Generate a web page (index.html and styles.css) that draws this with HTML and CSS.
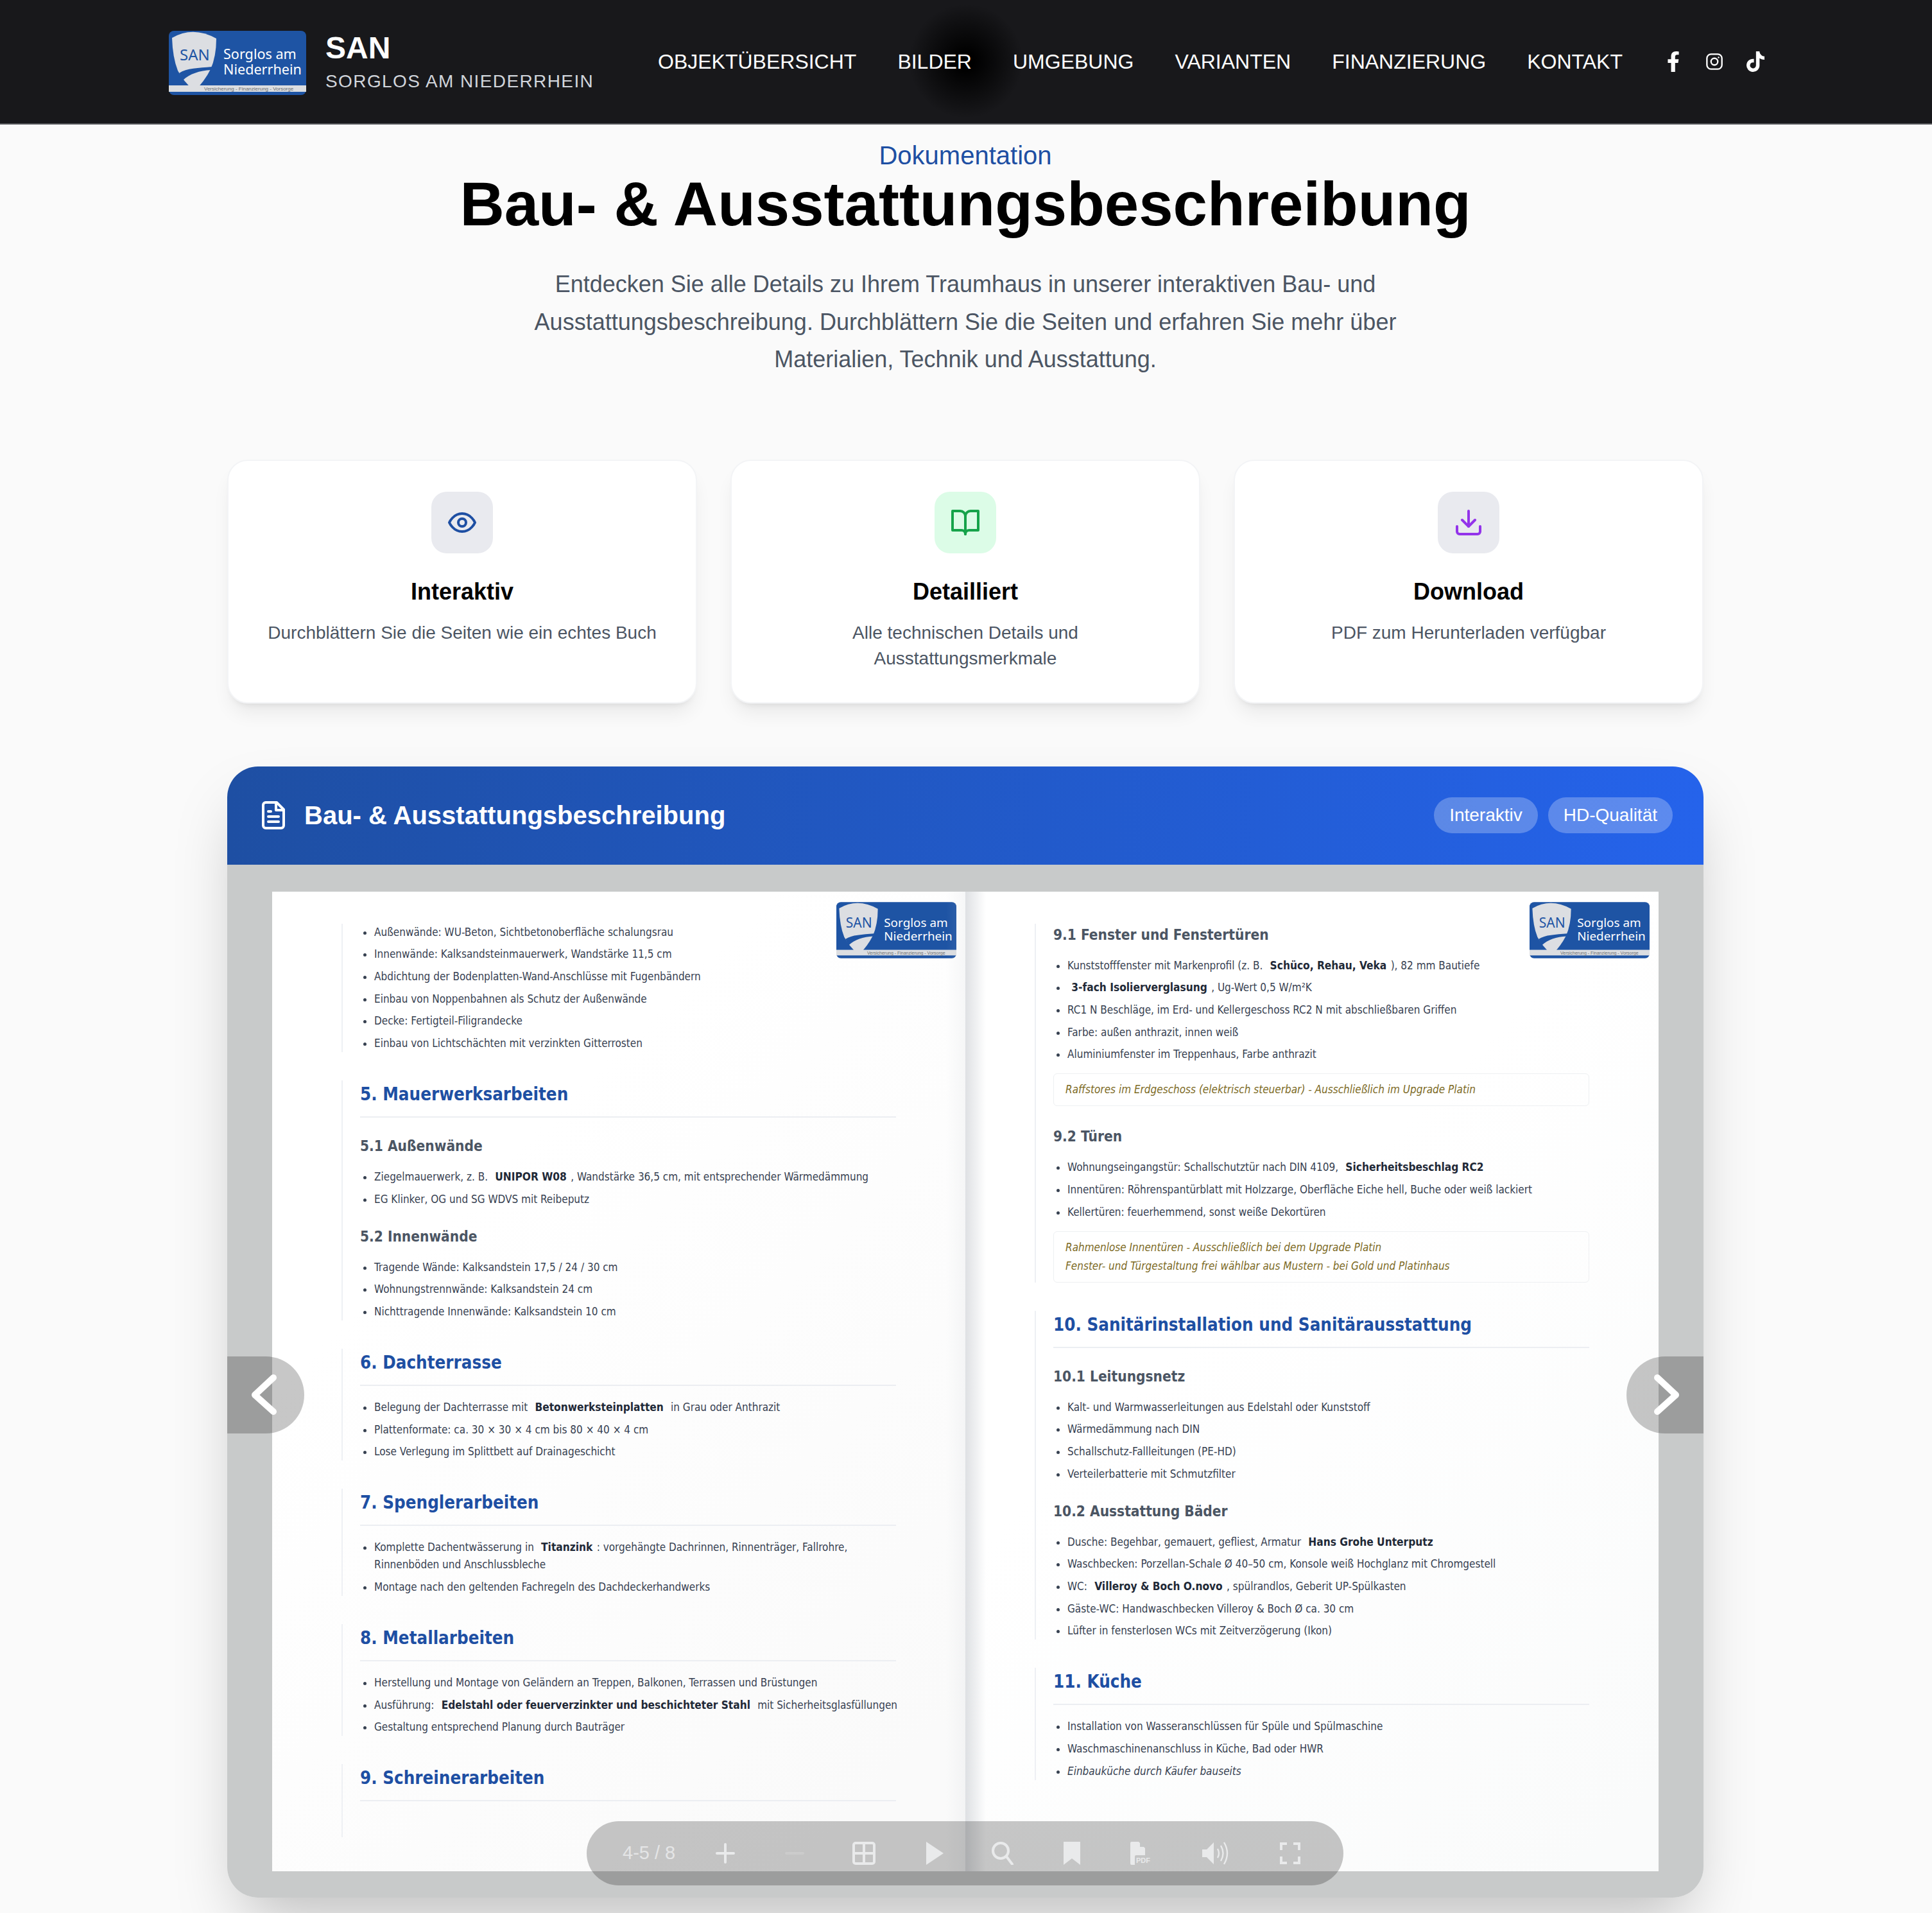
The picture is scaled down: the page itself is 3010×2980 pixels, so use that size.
FILE: index.html
```html
<!DOCTYPE html>
<html lang="de">
	<head>
		<meta http-equiv="Content-Type" content="text/html;charset=utf-8" />
		<title>Bau- &amp; Ausstattungsbeschreibung</title>
		<link rel="stylesheet" href="styles.css">
	</head>
	<body>
		<header class="topbar">
			<div class="brand">
				<svg class="brand-logo" viewBox="0 0 214 100">
					<rect width="214" height="100" rx="8" fill="#1e54a4"/>
					<rect y="85" width="214" height="10" fill="#dcdee1"/>
					<path d="M5 11 Q38 -8 74 12 Q74 40 65 60 Q56 78 40 94 Q22 78 14 62 Q6 42 5 11Z" fill="#dcdee2"/>
					<path d="M16 66 C28 58 46 58 67 56 L66 61 C48 62 32 67 22 77 Z" fill="#1e54a4"/>
					<text x="17" y="46" class="logo-san">SAN</text>
					<text x="85" y="44" class="logo-big">Sorglos am</text>
					<text x="85" y="68" class="logo-big">Niederrhein</text>
					<text x="55" y="93" class="logo-small">Versicherung - Finanzierung - Vorsorge</text>
				</svg>
				<div class="brand-text">
					<div class="brand-name">SAN</div>
					<div class="brand-sub">SORGLOS AM NIEDERRHEIN</div>
				</div>
			</div>
			<nav class="nav">
				<a>OBJEKTÜBERSICHT</a>
				<a>BILDER</a>
				<a>UMGEBUNG</a>
				<a>VARIANTEN</a>
				<a>FINANZIERUNG</a>
				<a>KONTAKT</a>
			</nav>
			<div class="social">
				<svg viewBox="0 0 320 512"><path fill="#fff" d="M279.14 288l14.22-92.66h-88.91v-60.13c0-25.35 12.42-50.06 52.24-50.06h40.42V6.26S260.43 0 225.36 0c-73.22 0-121.08 44.38-121.08 124.72v70.62H22.89V288h81.39v224h100.17V288z"/></svg>
				<svg viewBox="0 0 24 24" fill="none" stroke="#fff" stroke-width="2"><rect x="2" y="2" width="20" height="20" rx="5.5"/><circle cx="12" cy="12" r="4.5"/><circle cx="17.6" cy="6.4" r="1" fill="#fff" stroke="none"/></svg>
				<svg viewBox="0 0 448 512"><path fill="#fff" d="M448,209.91a210.06,210.06,0,0,1-122.77-39.25V349.38A162.55,162.55,0,1,1,185,188.31V278.2a74.62,74.62,0,1,0,52.23,71.18V0l88,0a121.18,121.18,0,0,0,1.86,22.17h0A122.18,122.18,0,0,0,381,102.39a121.43,121.43,0,0,0,67,20.14Z"/></svg>
			</div>
		</header>

		<main class="main">
			<section class="hero">
				<div class="hero-kicker">Dokumentation</div>
				<h1 class="hero-title">Bau- &amp; Ausstattungsbeschreibung</h1>
				<p class="hero-text">Entdecken Sie alle Details zu Ihrem Traumhaus in unserer interaktiven Bau- und Ausstattungsbeschreibung. Durchblättern Sie die Seiten und erfahren Sie mehr über Materialien, Technik und Ausstattung.</p>
			</section>

			<section class="cards">
				<div class="card">
					<div class="card-icon grey">
						<svg viewBox="0 0 24 24" fill="none" stroke="#1e4fa3" stroke-width="2" stroke-linecap="round" stroke-linejoin="round"><path d="M2 12s3-7 10-7 10 7 10 7-3 7-10 7-10-7-10-7Z"/><circle cx="12" cy="12" r="3"/></svg>
					</div>
					<h3 class="card-title">Interaktiv</h3>
					<p class="card-text">Durchblättern Sie die Seiten wie ein echtes Buch</p>
				</div>
				<div class="card">
					<div class="card-icon green">
						<svg viewBox="0 0 24 24" fill="none" stroke="#16a34a" stroke-width="2" stroke-linecap="round" stroke-linejoin="round"><path d="M2 3h6a4 4 0 0 1 4 4v14a3 3 0 0 0-3-3H2z"/><path d="M22 3h-6a4 4 0 0 0-4 4v14a3 3 0 0 1 3-3h7z"/></svg>
					</div>
					<h3 class="card-title">Detailliert</h3>
					<p class="card-text">Alle technischen Details und Ausstattungsmerkmale</p>
				</div>
				<div class="card">
					<div class="card-icon grey">
						<svg viewBox="0 0 24 24" fill="none" stroke="#9333ea" stroke-width="2" stroke-linecap="round" stroke-linejoin="round"><path d="M21 15v4a2 2 0 0 1-2 2H5a2 2 0 0 1-2-2v-4"/><polyline points="7 10 12 15 17 10"/><line x1="12" y1="15" x2="12" y2="3"/></svg>
					</div>
					<h3 class="card-title">Download</h3>
					<p class="card-text">PDF zum Herunterladen verfügbar</p>
				</div>
			</section>

			<section class="viewer">
				<div class="viewer-head">
					<div class="viewer-title">
						<svg viewBox="0 0 24 24" fill="none" stroke="#fff" stroke-width="2" stroke-linecap="round" stroke-linejoin="round"><path d="M14.5 2H6a2 2 0 0 0-2 2v16a2 2 0 0 0 2 2h12a2 2 0 0 0 2-2V7.5L14.5 2z"/><polyline points="14 2 14 8 20 8"/><line x1="16" y1="13" x2="8" y2="13"/><line x1="16" y1="17" x2="8" y2="17"/><line x1="10" y1="9" x2="8" y2="9"/></svg>
						<span>Bau- &amp; Ausstattungsbeschreibung</span>
					</div>
					<div class="badges">
						<span class="badge">Interaktiv</span>
						<span class="badge">HD-Qualität</span>
					</div>
				</div>

				<div class="viewer-body">
					<div class="book">
						<div class="page page-left">
							<svg class="page-logo" viewBox="0 0 214 100">
								<rect width="214" height="100" rx="8" fill="#1e54a4"/>
								<rect y="85" width="214" height="10" fill="#dcdee1"/>
								<path d="M5 11 Q38 -8 74 12 Q74 40 65 60 Q56 78 40 94 Q22 78 14 62 Q6 42 5 11Z" fill="#dcdee2"/>
								<path d="M16 66 C28 58 46 58 67 56 L66 61 C48 62 32 67 22 77 Z" fill="#1e54a4"/>
								<text x="17" y="46" class="logo-san">SAN</text>
								<text x="85" y="44" class="logo-big">Sorglos am</text>
								<text x="85" y="68" class="logo-big">Niederrhein</text>
								<text x="55" y="93" class="logo-small">Versicherung - Finanzierung - Vorsorge</text>
							</svg>
							<div class="block">
								<ul>
									<li>Außenwände: WU-Beton, Sichtbetonoberfläche schalungsrau</li>
									<li>Innenwände: Kalksandsteinmauerwerk, Wandstärke 11,5 cm</li>
									<li>Abdichtung der Bodenplatten-Wand-Anschlüsse mit Fugenbändern</li>
									<li>Einbau von Noppenbahnen als Schutz der Außenwände</li>
									<li>Decke: Fertigteil-Filigrandecke</li>
									<li>Einbau von Lichtschächten mit verzinkten Gitterrosten</li>
								</ul>
							</div>
							<div class="block">
								<h2>5. Mauerwerksarbeiten</h2>
								<h3>5.1 Außenwände</h3>
								<ul>
									<li>Ziegelmauerwerk, z. B. &nbsp;<strong>UNIPOR W08</strong> , Wandstärke 36,5 cm, mit entsprechender Wärmedämmung</li>
									<li>EG Klinker, OG und SG WDVS mit Reibeputz</li>
								</ul>
								<h3>5.2 Innenwände</h3>
								<ul>
									<li>Tragende Wände: Kalksandstein 17,5 / 24 / 30 cm</li>
									<li>Wohnungstrennwände: Kalksandstein 24 cm</li>
									<li>Nichttragende Innenwände: Kalksandstein 10 cm</li>
								</ul>
							</div>
							<div class="block">
								<h2>6. Dachterrasse</h2>
								<ul>
									<li>Belegung der Dachterrasse mit &nbsp;<strong>Betonwerksteinplatten</strong>&nbsp; in Grau oder Anthrazit</li>
									<li>Plattenformate: ca. 30 × 30 × 4 cm bis 80 × 40 × 4 cm</li>
									<li>Lose Verlegung im Splittbett auf Drainageschicht</li>
								</ul>
							</div>
							<div class="block">
								<h2>7. Spenglerarbeiten</h2>
								<ul>
									<li>Komplette Dachentwässerung in &nbsp;<strong>Titanzink</strong> : vorgehängte Dachrinnen, Rinnenträger, Fallrohre,<br>Rinnenböden und Anschlussbleche</li>
									<li>Montage nach den geltenden Fachregeln des Dachdeckerhandwerks</li>
								</ul>
							</div>
							<div class="block">
								<h2>8. Metallarbeiten</h2>
								<ul>
									<li>Herstellung und Montage von Geländern an Treppen, Balkonen, Terrassen und Brüstungen</li>
									<li class="one-line">Ausführung: &nbsp;<strong>Edelstahl oder feuerverzinkter und beschichteter Stahl</strong>&nbsp; mit Sicherheitsglasfüllungen</li>
									<li>Gestaltung entsprechend Planung durch Bauträger</li>
								</ul>
							</div>
							<div class="block block-open">
								<h2>9. Schreinerarbeiten</h2>
							</div>
						</div>

						<div class="page page-right">
							<svg class="page-logo" viewBox="0 0 214 100">
								<rect width="214" height="100" rx="8" fill="#1e54a4"/>
								<rect y="85" width="214" height="10" fill="#dcdee1"/>
								<path d="M5 11 Q38 -8 74 12 Q74 40 65 60 Q56 78 40 94 Q22 78 14 62 Q6 42 5 11Z" fill="#dcdee2"/>
								<path d="M16 66 C28 58 46 58 67 56 L66 61 C48 62 32 67 22 77 Z" fill="#1e54a4"/>
								<text x="17" y="46" class="logo-san">SAN</text>
								<text x="85" y="44" class="logo-big">Sorglos am</text>
								<text x="85" y="68" class="logo-big">Niederrhein</text>
								<text x="55" y="93" class="logo-small">Versicherung - Finanzierung - Vorsorge</text>
							</svg>
							<div class="block">
								<h3>9.1 Fenster und Fenstertüren</h3>
								<ul>
									<li>Kunststofffenster mit Markenprofil (z. B. &nbsp;<strong>Schüco, Rehau, Veka</strong> ), 82 mm Bautiefe</li>
									<li>&nbsp;<strong>3-fach Isolierverglasung</strong> , Ug-Wert 0,5 W/m²K</li>
									<li>RC1 N Beschläge, im Erd- und Kellergeschoss RC2 N mit abschließbaren Griffen</li>
									<li>Farbe: außen anthrazit, innen weiß</li>
									<li>Aluminiumfenster im Treppenhaus, Farbe anthrazit</li>
								</ul>
								<div class="note">Raffstores im Erdgeschoss (elektrisch steuerbar) - Ausschließlich im Upgrade Platin</div>
								<h3>9.2 Türen</h3>
								<ul>
									<li>Wohnungseingangstür: Schallschutztür nach DIN 4109, &nbsp;<strong>Sicherheitsbeschlag RC2</strong></li>
									<li>Innentüren: Röhrenspantürblatt mit Holzzarge, Oberfläche Eiche hell, Buche oder weiß lackiert</li>
									<li>Kellertüren: feuerhemmend, sonst weiße Dekortüren</li>
								</ul>
								<div class="note">Rahmenlose Innentüren - Ausschließlich bei dem Upgrade Platin<br>Fenster- und Türgestaltung frei wählbar aus Mustern - bei Gold und Platinhaus</div>
							</div>
							<div class="block">
								<h2>10. Sanitärinstallation und Sanitärausstattung</h2>
								<h3>10.1 Leitungsnetz</h3>
								<ul>
									<li>Kalt- und Warmwasserleitungen aus Edelstahl oder Kunststoff</li>
									<li>Wärmedämmung nach DIN</li>
									<li>Schallschutz-Fallleitungen (PE-HD)</li>
									<li>Verteilerbatterie mit Schmutzfilter</li>
								</ul>
								<h3>10.2 Ausstattung Bäder</h3>
								<ul>
									<li>Dusche: Begehbar, gemauert, gefliest, Armatur &nbsp;<strong>Hans Grohe Unterputz</strong></li>
									<li>Waschbecken: Porzellan-Schale Ø 40–50 cm, Konsole weiß Hochglanz mit Chromgestell</li>
									<li>WC: &nbsp;<strong>Villeroy &amp; Boch O.novo</strong> , spülrandlos, Geberit UP-Spülkasten</li>
									<li>Gäste-WC: Handwaschbecken Villeroy &amp; Boch Ø ca. 30 cm</li>
									<li>Lüfter in fensterlosen WCs mit Zeitverzögerung (Ikon)</li>
								</ul>
							</div>
							<div class="block">
								<h2>11. Küche</h2>
								<ul>
									<li>Installation von Wasseranschlüssen für Spüle und Spülmaschine</li>
									<li>Waschmaschinenanschluss in Küche, Bad oder HWR</li>
									<li><em>Einbauküche durch Käufer bauseits</em></li>
								</ul>
							</div>
						</div>
					</div>

					<div class="arrow arrow-left">
						<svg viewBox="0 0 120 120" fill="none" stroke="#fff" stroke-width="10" stroke-linecap="round" stroke-linejoin="round"><polyline points="72 33 43 60 72 86"/></svg>
					</div>
					<div class="arrow arrow-right">
						<svg viewBox="0 0 120 120" fill="none" stroke="#fff" stroke-width="10" stroke-linecap="round" stroke-linejoin="round"><polyline points="48 33 77 60 48 86"/></svg>
					</div>

					<div class="controls">
						<span class="count">4-5 / 8</span>
						<span class="ctl"><svg viewBox="0 0 36 36" fill="none" stroke="currentColor" stroke-width="4" stroke-linecap="round"><path d="M18 4v28M5 18h26"/></svg></span>
						<span class="ctl faded"><svg viewBox="0 0 36 36" fill="none" stroke="currentColor" stroke-width="4" stroke-linecap="round"><path d="M5 18h26"/></svg></span>
						<span class="ctl"><svg viewBox="0 0 36 36" fill="none" stroke="currentColor" stroke-width="4"><rect x="2" y="2" width="32" height="32" rx="3"/><path d="M18 2v32M2 18h32"/></svg></span>
						<span class="ctl"><svg viewBox="0 0 36 36" fill="currentColor"><path d="M7 0 L34 18 L7 36 Z"/></svg></span>
						<span class="ctl"><svg viewBox="0 0 36 36" fill="none" stroke="currentColor" stroke-width="4" stroke-linecap="round"><circle cx="15" cy="14" r="12"/><path d="M24 23l9 12"/></svg></span>
						<span class="ctl"><svg viewBox="0 0 36 36" fill="currentColor"><path d="M5 0h26v36L18 26 5 36Z"/></svg></span>
						<span class="ctl"><svg viewBox="0 0 36 36" fill="currentColor"><path d="M1 2q0-2 2-2h11l10 10v11H10q-2 0-2 2v13H3q-2 0-2-2Z"/><path d="M16 0l8 8h-8Z" fill="#c4c6c6"/><text x="10" y="33" class="pdf-text">PDF</text></svg></span>
						<span class="ctl wide"><svg viewBox="0 0 44 36" fill="currentColor"><path d="M1 12h7L19 1v34L8 24H1Z"/><path d="M25 11q4 7 0 14M30 6q7 12 0 24M35 1q10 17 0 34" fill="none" stroke="currentColor" stroke-width="2.4"/></svg></span>
						<span class="ctl"><svg viewBox="0 0 36 36" fill="none" stroke="currentColor" stroke-width="4"><path d="M13 3H4v10M23 3h9v10M13 33H4V23M23 33h9V23"/></svg></span>
					</div>
				</div>
			</section>
		</main>
	</body>
</html>
```

FILE: styles.css
```css
html, body {
	margin: 0;
	padding: 0;
	height: 2980px;
	overflow: hidden;
}
body {
	background-color: #fafafa;
	font-family: "Liberation Sans", Arial, sans-serif;
	color: #000;
}

/* logo */
.logo-san {
	font-family: "Noto Sans", sans-serif;
	font-size: 24px;
	fill: #1e54a4;
}
.logo-big {
	font-family: "Noto Sans", sans-serif;
	font-size: 21.6px;
	fill: #fff;
}
.logo-small {
	font-family: "Liberation Sans", sans-serif;
	font-size: 8px;
	fill: #6b6e73;
}

/* top bar */
.topbar {
	position: relative;
	display: flex;
	align-items: center;
	height: 192px;
	padding-left: 263px;
	background-color: #18181b;
	border-bottom: 2px solid #55565a;
}
.topbar::after {
	content: "";
	position: absolute;
	left: 1415px;
	top: 5px;
	width: 180px;
	height: 180px;
	background: radial-gradient(circle, #000 10%, rgba(0,0,0,0) 70%);
}
.brand {
	display: flex;
	align-items: center;
	width: 762px;
	flex: none;
}
.brand-logo {
	width: 214px;
	height: 100px;
	margin-right: 30px;
	margin-top: 4px;
}
.brand-text {
	padding-top: 2px;
}
.brand-name {
	font-size: 48px;
	font-weight: bold;
	line-height: 56px;
	color: #fff;
}
.brand-sub {
	margin-top: 4px;
	font-size: 28px;
	line-height: 40px;
	letter-spacing: 1.4px;
	color: #d1d5db;
}
.nav {
	position: relative;
	z-index: 1;
	display: flex;
	gap: 64px;
	font-size: 32px;
	color: #fff;
}
.social {
	position: relative;
	z-index: 1;
	display: flex;
	align-items: center;
	gap: 36px;
	margin-left: 65px;
}
.social svg {
	display: block;
	width: 28px;
	height: 32px;
}

/* hero */
.main {
	width: 2300px;
	margin-left: 354px;
}
.hero {
	padding-top: 18px;
	text-align: center;
}
.hero-kicker {
	font-size: 40px;
	line-height: 60px;
	color: #1e4fa3;
}
.hero-title {
	margin: -1px 0 0;
	font-size: 96px;
	line-height: 94px;
	font-weight: bold;
}
.hero-text {
	width: 1400px;
	margin: 49px auto 0;
	font-size: 36px;
	line-height: 58.5px;
	color: #4b5563;
}

/* feature cards */
.cards {
	display: grid;
	grid-template-columns: repeat(3, 1fr);
	gap: 52px;
	margin-top: 126px;
}
.card {
	padding: 48px;
	background-color: #fff;
	border: 2px solid #f3f4f6;
	border-radius: 32px;
	text-align: center;
	box-shadow: 0 20px 30px -6px rgba(0,0,0,0.07), 0 8px 12px -8px rgba(0,0,0,0.1);
}
.card-icon {
	display: flex;
	align-items: center;
	justify-content: center;
	width: 96px;
	height: 96px;
	margin: 0 auto 32px;
	border-radius: 24px;
}
.card-icon svg {
	width: 48px;
	height: 48px;
}
.card-icon.grey {
	background-color: #e9eaef;
}
.card-icon.green {
	background-color: #dcfce7;
}
.card-title {
	margin: 0 0 16px;
	font-size: 36px;
	line-height: 56px;
	font-weight: bold;
}
.card-text {
	margin: 0;
	font-size: 28px;
	line-height: 40px;
	color: #4b5563;
}

/* book viewer */
.viewer {
	margin-top: 98px;
	border-radius: 48px;
	overflow: hidden;
	box-shadow: 0 50px 100px -24px rgba(0,0,0,0.25);
}
.viewer-head {
	display: flex;
	align-items: center;
	justify-content: space-between;
	height: 153px;
	padding: 0 48px;
	background: linear-gradient(90deg, #1e4fa3, #2563eb);
	color: #fff;
}
.viewer-title {
	display: flex;
	align-items: center;
	gap: 24px;
	font-size: 40px;
	font-weight: bold;
}
.viewer-title svg {
	width: 48px;
	height: 48px;
}
.badges {
	display: flex;
	gap: 16px;
}
.badge {
	padding: 0 24px;
	font-size: 28px;
	line-height: 56px;
	border-radius: 28px;
	background-color: rgba(255,255,255,0.26);
}
.viewer-body {
	position: relative;
	height: 1526px;
	padding: 42px 70px 41px;
	background-color: #c8caca;
}
.book {
	display: grid;
	grid-template-columns: 1fr 1fr;
	height: 100%;
}
.page {
	position: relative;
	padding: 50px 108px 0;
	font-family: "DejaVu Sans", sans-serif;
	font-stretch: condensed;
	color: #374151;
	overflow: hidden;
}
.page-left {
	background: linear-gradient(135deg, #fff 30%, #fafafa 90%);
}
.page-right {
	background: linear-gradient(135deg, #fff 40%, #fafbfb 95%);
}
.page-left::after {
	content: "";
	position: absolute;
	top: 0;
	bottom: 0;
	right: 0;
	width: 30px;
	background: linear-gradient(90deg, rgba(200,204,210,0), rgba(200,204,210,0.15));
}
.page-right::after {
	content: "";
	position: absolute;
	top: 0;
	bottom: 0;
	left: 0;
	width: 32px;
	background: linear-gradient(90deg, rgba(190,194,200,0.5), rgba(190,194,200,0));
}
.page-logo {
	position: absolute;
	top: 16px;
	right: 14px;
	width: 187px;
	height: 88px;
}
.block {
	margin-bottom: 44px;
	padding-left: 27px;
	border-left: 2px solid #eef0f4;
}
.block-open {
	padding-bottom: 56px;
}
.page h2 {
	margin: 0;
	padding-bottom: 14px;
	font-size: 27.5px;
	line-height: 42px;
	font-weight: bold;
	color: #1e4fa3;
	border-bottom: 2px solid #eceef2;
}
.page h3 {
	margin: 27px 0 18px;
	font-size: 22.5px;
	line-height: 34px;
	font-weight: bold;
	color: #4b5563;
}
.block > h3:first-child {
	margin-top: 0;
}
.note + h3 {
	margin-top: 30px;
}
.page ul {
	margin: 20px 0 0;
	padding: 0 0 0 22px;
	font-size: 17px;
	line-height: 27px;
}
.page h3 + ul {
	margin-top: 0;
}
.block > ul:first-child {
	margin-top: 0;
}
.page li {
	margin-bottom: 7.7px;
}
.page li:last-child {
	margin-bottom: 0;
}
.page li.one-line {
	white-space: nowrap;
}
.page strong {
	margin: 0 1.5px;
	font-size: 17.2px;
	color: #1f2937;
}
.note {
	margin-top: 16px;
	padding: 10px 18px;
	font-size: 17px;
	line-height: 29px;
	font-style: italic;
	color: #7c6a1f;
	border: 1px solid #eef0f2;
	border-radius: 6px;
}

/* overlays on the book */
.arrow {
	position: absolute;
	top: 766px;
	width: 120px;
	height: 120px;
	background-color: rgba(0,0,0,0.22);
}
.arrow svg {
	display: block;
	width: 120px;
	height: 120px;
}
.arrow-left {
	left: 0;
	border-radius: 0 60px 60px 0;
}
.arrow-right {
	right: 0;
	border-radius: 60px 0 0 60px;
}
.controls {
	position: absolute;
	left: 560px;
	bottom: 19px;
	display: flex;
	align-items: center;
	width: 1179px;
	height: 100px;
	padding-left: 56px;
	box-sizing: border-box;
	border-radius: 50px;
	background-color: rgba(0,0,0,0.22);
	color: #e9eaeb;
}
.count {
	width: 106px;
	font-size: 29px;
	color: #e4e5e6;
}
.ctl {
	display: flex;
	justify-content: center;
	width: 108px;
}
.ctl svg {
	display: block;
	width: 36px;
	height: 36px;
}
.ctl.faded {
	opacity: 0.22;
}
.ctl.wide {
	width: 124px;
}
.ctl.wide svg {
	width: 44px;
}
.pdf-text {
	font-family: "Liberation Sans", sans-serif;
	font-size: 11px;
	font-weight: bold;
}
```
